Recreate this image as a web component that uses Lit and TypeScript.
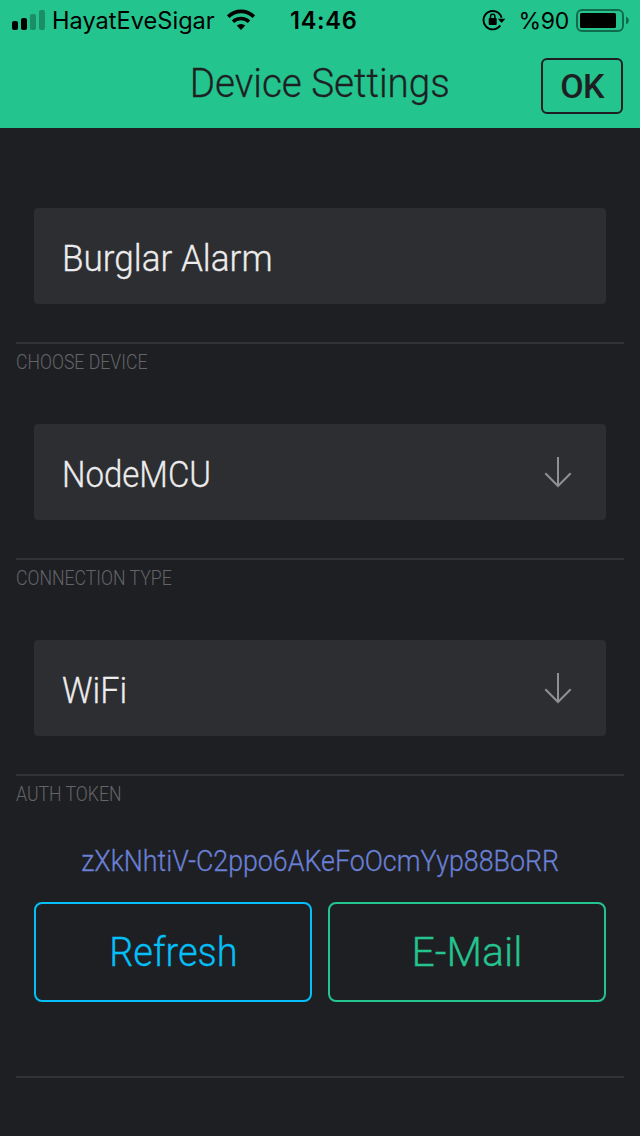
import { LitElement, html, css } from "lit";
import { customElement } from "lit/decorators.js";

@customElement("status-bar")
class StatusBar extends LitElement {
  static styles = css`
    :host { display: grid; grid-template-columns: 278px auto 1fr; align-items: center; height: 40px; padding: 0 11px 0 12px; color: #000; font: 400 23.6px/42px Inter, sans-serif; white-space: nowrap; }
    .side { display: flex; align-items: center; }
    .right { justify-content: flex-end; }
    svg { display: block; flex: none; margin-bottom: 2px; }
    .carrier { margin: 0 12px 0 6px; }
    .time { font-weight: 600; letter-spacing: 0.7px; }
    .percent { margin: 0 7px 0 13px; font-size: 23px; letter-spacing: -0.3px; }
  `;
  render() {
    return html`
      <div class="side">
        <svg width="34" height="40" viewBox="0 0 34 40">
          <rect x="0" y="21" width="6" height="9" rx="2" />
          <rect x="9" y="18" width="6" height="12" rx="2" />
          <g opacity=".27"><rect x="18" y="14" width="6" height="16" rx="2" /><rect x="27" y="10" width="6" height="20" rx="2" /></g>
        </svg>
        <span class="carrier">HayatEveSigar</span>
        <svg width="28" height="40" viewBox="0 0 28 40" fill="none" stroke="#000">
          <path d="M1.2 16.6a18.2 18.2 0 0 1 25.6 0" stroke-width="3.6" />
          <path d="M6 21.8a11.4 11.4 0 0 1 16 0" stroke-width="3.4" />
          <path d="M14 30l-4.3-4.4a6.4 6.4 0 0 1 8.6 0z" fill="#000" stroke="none" />
        </svg>
      </div>
      <span class="time">14:46</span>
      <div class="side right">
        <svg width="24" height="40" viewBox="0 0 24 40">
          <path d="M18.3 25.4a9.2 9.2 0 1 1 1.3-7.6" fill="none" stroke="#000" stroke-width="1.9" />
          <path d="M15.8 18.7h7.6l-3.8 4.4z" />
          <rect x="6.7" y="18" width="8" height="7" rx="1" />
          <path d="M8.5 18.5v-2.1a2.2 2.2 0 0 1 4.4 0v2.1" fill="none" stroke="#000" stroke-width="1.5" />
        </svg>
        <span class="percent">%90</span>
        <svg width="53" height="40" viewBox="0 0 53 40">
          <rect x="1" y="10" width="46" height="21" rx="5" fill="none" stroke="#000" stroke-opacity=".45" stroke-width="2" />
          <rect x="4" y="13" width="36" height="15" rx="1.5" />
          <path d="M50 16.5q3 1.4 3 4t-3 4z" opacity=".45" />
        </svg>
      </div>
    `;
  }
}

@customElement("app-root")
class AppRoot extends LitElement {
  static styles = css`
    :host { display: flex; flex-direction: column; box-sizing: border-box; width: 640px; height: 1136px; overflow: hidden; background: #1e1f23; color: #ececec; font-family: Roboto, sans-serif; font-weight: 300; white-space: nowrap; }
    .header { height: 128px; background: #24c48e; color: #1e1f23; flex: none; }
    .bar { display: grid; grid-template-columns: 1fr auto 1fr; align-items: center; height: 88px; padding: 2px 17px 0 17px; box-sizing: border-box; }
    .title { grid-column: 2; font-size: 40px; line-height: 48px; padding-bottom: 3px; transform: scaleX(0.965); -webkit-text-stroke: 0.3px currentColor; }
    .ok { justify-self: end; width: 82px; height: 56px; margin-top: 1px; border: 2px solid #1e1f23; border-radius: 6px; box-sizing: border-box; background: none; color: inherit; font: 500 34px/52px Roboto, sans-serif; padding: 0; text-align: center; letter-spacing: -0.8px; }
    .section { display: flex; flex-direction: column; height: 216px; margin: 0 16px; border-bottom: 2px solid #323337; box-sizing: border-box; flex: none; }
    .label { height: 40px; line-height: 37px; font-size: 20px; color: #646568; transform: scaleX(0.883); transform-origin: left; }
    .field { display: flex; align-items: center; justify-content: space-between; height: 96px; box-sizing: border-box; margin: 40px 18px 0; padding: 0 33px 0 28px; border-radius: 4px; background: #2d2e32; font-size: 36.5px; }
    .value { padding-top: 4px; transform-origin: left; -webkit-text-stroke: 0.3px currentColor; }
    .name { transform: scaleX(0.962); }
    .device { transform: scaleX(0.904); }
    .connection { transform: scaleX(0.935); }
    .arrow { display: block; }
    .token { align-self: center; margin: 20px 0 16px; font-size: 29.5px; line-height: 50px; color: #6a80d5; transform: scaleX(0.908); -webkit-text-stroke: 0.3px currentColor; }
    .actions { display: grid; grid-template-columns: 1fr 1fr; gap: 16px; margin: 0 18px; }
    .btn { display: flex; justify-content: center; height: 100px; box-sizing: border-box; border: 2px solid currentColor; border-radius: 8px; background: none; font: 300 41px/97px Roboto, sans-serif; padding: 0; -webkit-text-stroke: 0.3px currentColor; }
    .narrow { transform: scaleX(0.926); }
    .blue { color: #04c0f8; }
    .green { color: #24c48e; }
    .last { height: 302px; }
  `;
  arrow() {
    return html`<svg class="arrow" width="30" height="32" viewBox="0 0 30 32" fill="none" stroke="#8f9092" stroke-width="2"><path d="M15 1v29M2.3 17.3L15 30l12.7-12.7" /></svg>`;
  }
  render() {
    return html`
      <div class="header"><status-bar></status-bar>
        <div class="bar"><span class="title">Device Settings</span><button class="ok">OK</button></div>
      </div>
      <div class="section"><div class="label"></div><div class="field"><span class="value name">Burglar Alarm</span></div></div>
      <div class="section"><div class="label">CHOOSE DEVICE</div><div class="field"><span class="value device">NodeMCU</span>${this.arrow()}</div></div>
      <div class="section"><div class="label">CONNECTION TYPE</div><div class="field"><span class="value connection">WiFi</span>${this.arrow()}</div></div>
      <div class="section last"><div class="label">AUTH TOKEN</div><div class="token">zXkNhtiV-C2ppo6AKeFoOcmYyp88BoRR</div>
        <div class="actions"><button class="btn blue"><span class="narrow">Refresh</span></button><button class="btn green"><span>E-Mail</span></button></div>
      </div>
    `;
  }
}
